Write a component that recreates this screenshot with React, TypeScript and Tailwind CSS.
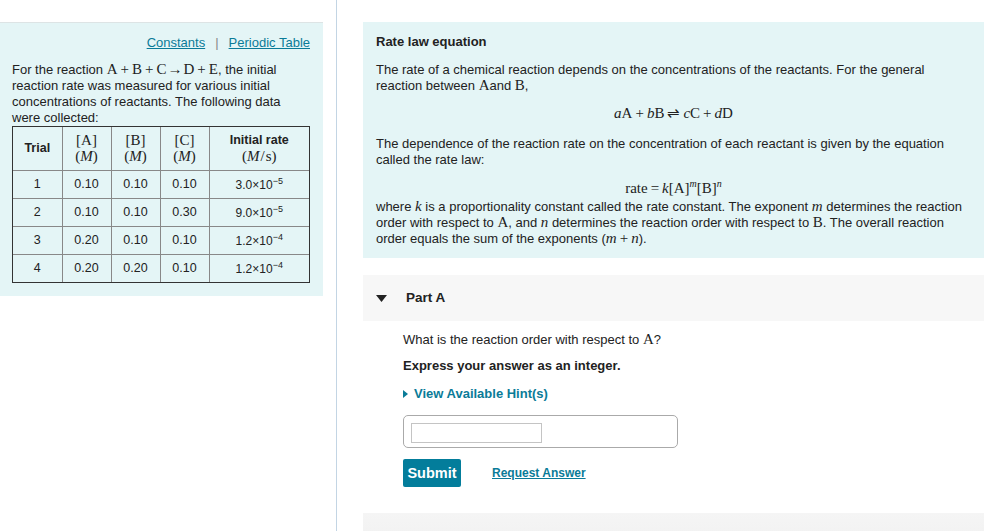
import React from "react";

const serif = "font-['Liberation_Serif','Times_New_Roman',serif]";

function I({ children }: { children: React.ReactNode }) {
  return <span className={`${serif} italic text-[15px] leading-[12px]`}>{children}</span>;
}
function R({ children }: { children: React.ReactNode }) {
  return <span className={`${serif} text-[15px] leading-[12px]`}>{children}</span>;
}
function Op({ children }: { children: React.ReactNode }) {
  return <span className="mx-[3px]">{children}</span>;
}

function Rate({ base, exp }: { base: string; exp: string }) {
  return (
    <span>
      {base}×10<span className="text-[9px] relative top-[-5px]">−{exp}</span>
    </span>
  );
}

const rows = [
  ["1", "0.10", "0.10", "0.10", "3.0", "5"],
  ["2", "0.10", "0.10", "0.30", "9.0", "5"],
  ["3", "0.20", "0.10", "0.10", "1.2", "4"],
  ["4", "0.20", "0.20", "0.10", "1.2", "4"],
];

export default function App() {
  return (
    <div className="flex w-[984px] h-[531px] overflow-hidden bg-white font-['Liberation_Sans',Arial,sans-serif] text-[#222] text-[13px] leading-[16px]">
      {/* Left column */}
      <div className="w-[337px] shrink-0 border-r border-[#c3d5e4]">
        <div className="mt-[22px] w-[323px] bg-[#e4f5f6] border-t border-[#dde4e5] px-[12px] pt-[12px] pb-[13px]">
          <div className="flex justify-end items-center gap-[10px] pr-[1px] text-[13px] text-[#0a7b98]">
            <span className="underline">Constants</span>
            <span className="text-[#888]">|</span>
            <span className="underline">Periodic Table</span>
          </div>
          <p className="mt-[11px]">
            For the reaction{" "}
            <R>
              A<Op>+</Op>B<Op>+</Op>C<span className="mx-[1px]">→</span>D<Op>+</Op>E
            </R>
            , the initial reaction rate was measured for various initial concentrations of reactants. The
            following data were collected:
          </p>
          <div className="w-[298px] border border-[#333]">
            <table className="w-full border-collapse text-center">
              <thead>
                <tr className="h-[43px]">
                  <th className="w-[49px] border-r border-b border-[#888] font-bold text-[12.5px]">Trial</th>
                  {["A", "B", "C"].map((x) => (
                    <th key={x} className="w-[49px] border-r border-b border-[#888] font-normal">
                      <div className={`${serif} text-[15px] leading-[16px]`}>[{x}]</div>
                      <div className={`${serif} text-[15px] leading-[16px]`}>
                        (<span className="italic">M</span>)
                      </div>
                    </th>
                  ))}
                  <th className="border-b border-[#888]">
                    <div className="font-bold text-[12.5px] leading-[16px]">Initial rate</div>
                    <div className={`${serif} font-normal text-[15px] leading-[16px]`}>
                      (<span className="italic">M</span>
                      <span className="mx-[1px]">/</span>s)
                    </div>
                  </th>
                </tr>
              </thead>
              <tbody>
                {rows.map((r, i) => (
                  <tr key={r[0]} className="h-[28px]">
                    {r.slice(0, 4).map((c, j) => (
                      <td
                        key={j}
                        className={`border-r border-[#888] text-[12.5px] ${i < 3 ? "border-b" : ""}`}
                      >
                        {c}
                      </td>
                    ))}
                    <td className={`border-[#888] text-[12px] pt-[3px] ${i < 3 ? "border-b" : ""}`}>
                      <Rate base={r[4]} exp={r[5]} />
                    </td>
                  </tr>
                ))}
              </tbody>
            </table>
          </div>
        </div>
      </div>

      {/* Right column */}
      <div className="flex-1 pl-[26px] pt-[22px]">
        <div className="bg-[#e4f5f6] px-[13px] pt-[12px] pb-[11px]">
          <div className="font-bold">Rate law equation</div>
          <p className="mt-[12px]">
            The rate of a chemical reaction depends on the concentrations of the reactants. For the general
            reaction between <R>A</R>and <R>B</R>,
          </p>
          <div className={`${serif} text-[15px] leading-[18px] text-center mt-[10px]`}>
            <span className="italic">a</span>A<Op>+</Op>
            <span className="italic">b</span>B<Op>⇌</Op>
            <span className="italic">c</span>C<Op>+</Op>
            <span className="italic">d</span>D
          </div>
          <p className="mt-[14px]">
            The dependence of the reaction rate on the concentration of each reactant is given by the equation
            called the rate law:
          </p>
          <div className={`${serif} text-[15px] leading-[18px] text-center mt-[11px]`}>
            rate<Op>=</Op>
            <span className="italic">k</span>[A]
            <span className="italic text-[10px] leading-[10px] relative top-[-6px]">m</span>[B]
            <span className="italic text-[10px] leading-[10px] relative top-[-6px]">n</span>
          </div>
          <p className="mt-[2px]">
            where <I>k</I> is a proportionality constant called the rate constant. The exponent <I>m</I>{" "}
            determines the reaction order with respect to <R>A</R>, and <I>n</I> determines the reaction order
            with respect to <R>B</R>. The overall reaction order equals the sum of the exponents (<I>m</I>
            <R>
              <Op>+</Op>
            </R>
            <I>n</I>).
          </p>
        </div>

        {/* Part A */}
        <div className="mt-[17px] h-[46px] bg-[#f7f7f7] flex items-center pl-[13px]">
          <svg width="11" height="7" viewBox="0 0 11 7" className="shrink-0">
            <polygon points="0,0 11,0 5.5,7" fill="#222" />
          </svg>
          <span className="ml-[19px] font-bold text-[13.5px]">Part A</span>
        </div>

        <div className="pl-[40px]">
          <p className="mt-[11px]">
            What is the reaction order with respect to <R>A</R>?
          </p>
          <p className="mt-[10px] font-bold">Express your answer as an integer.</p>
          <div className="mt-[12px] flex items-center font-bold text-[#0a7b98]">
            <svg width="5" height="8" viewBox="0 0 5 8" className="mr-[6px]">
              <polygon points="0,0 5,4 0,8" fill="#0a7b98" />
            </svg>
            View Available Hint(s)
          </div>
          <div className="mt-[13px] w-[275px] h-[33px] border border-[#aaa] rounded-[5px] bg-white pl-[7px] pt-[7px]">
            <div className="w-[131px] h-[20px] border border-[#c4c4c4]" />
          </div>
          <div className="mt-[11px] flex items-center">
            <div className="w-[58px] h-[28px] bg-[#037d9b] rounded-[2px] text-white font-bold text-[14.5px] flex items-center justify-center">
              Submit
            </div>
            <span className="ml-[31px] text-[12px] font-bold text-[#0a7b98] underline">Request Answer</span>
          </div>
        </div>

        {/* Part B (cut off) */}
        <div className="mt-[26px] h-[46px] bg-gradient-to-b from-[#f5f5f5] to-[#efefef] flex items-center pl-[13px]">
          <svg width="11" height="7" viewBox="0 0 11 7" className="shrink-0">
            <polygon points="0,0 11,0 5.5,7" fill="#222" />
          </svg>
          <span className="ml-[19px] font-bold text-[13.5px]">Part B</span>
        </div>
      </div>
    </div>
  );
}
